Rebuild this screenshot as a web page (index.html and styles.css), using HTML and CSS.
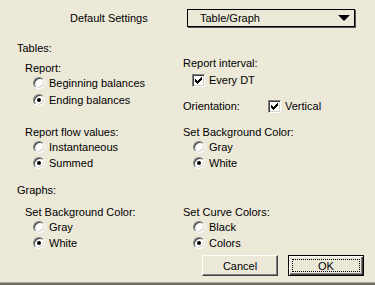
FILE: index.html
```html
<!DOCTYPE html>
<html lang="en">

<head>
    <meta charset="UTF-8">
    <title>Default Settings</title>
    <link rel="stylesheet" href="styles.css">
</head>

<body>
    <div class="dialog">
        <!-- top: settings popup -->
        <div class="header">
            <span class="header-label">Default Settings</span>
            <div class="popup">
                <span>Table/Graph</span>
                <span class="arrow"></span>
            </div>
        </div>

        <!-- tables -->
        <div class="cols block1">
            <div class="col">
                <div class="section-title">Tables:</div>
                <div class="group report">
                    <div class="group-title">Report:</div>
                    <div class="opt"><span class="radio"></span>Beginning balances</div>
                    <div class="opt ending"><span class="radio on"></span>Ending balances</div>
                </div>
            </div>
            <div class="col interval">
                <div class="group-title">Report interval:</div>
                <div class="opt check-opt every"><span class="check"><svg viewBox="0 0 7 7" width="7" height="7"><path d="M0 2h1v3H0zM1 3h1v3H1zM2 4h1v3H2zM3 3h1v3H3zM4 2h1v3H4zM5 1h1v3H5zM6 0h1v3H6z" /></svg></span>Every DT</div>
                <div class="orientation">
                    <span class="orient-label">Orientation:</span>
                    <span class="check"><svg viewBox="0 0 7 7" width="7" height="7"><path d="M0 2h1v3H0zM1 3h1v3H1zM2 4h1v3H2zM3 3h1v3H3zM4 2h1v3H4zM5 1h1v3H5zM6 0h1v3H6z" /></svg></span>
                    <span>Vertical</span>
                </div>
            </div>
        </div>

        <div class="cols block2">
            <div class="col">
                <div class="group">
                    <div class="group-title">Report flow values:</div>
                    <div class="opt"><span class="radio"></span>Instantaneous</div>
                    <div class="opt"><span class="radio on"></span>Summed</div>
                </div>
            </div>
            <div class="col">
                <div class="group-title">Set Background Color:</div>
                <div class="opt right-opt"><span class="radio"></span>Gray</div>
                <div class="opt right-opt"><span class="radio on"></span>White</div>
            </div>
        </div>

        <!-- graphs -->
        <div class="section-title graphs">Graphs:</div>
        <div class="cols block3">
            <div class="col">
                <div class="group">
                    <div class="group-title">Set Background Color:</div>
                    <div class="opt"><span class="radio"></span>Gray</div>
                    <div class="opt"><span class="radio on"></span>White</div>
                </div>
            </div>
            <div class="col">
                <div class="group-title">Set Curve Colors:</div>
                <div class="opt right-opt"><span class="radio"></span>Black</div>
                <div class="opt right-opt"><span class="radio on"></span>Colors</div>
            </div>
        </div>

        <!-- buttons -->
        <div class="buttons">
            <button class="btn">Cancel</button>
            <button class="btn default">OK</button>
        </div>
    </div>
</body>

</html>
```

FILE: styles.css
```css
* {
    margin: 0;
    padding: 0;
}

body {
    background: #716f64;
    font-family: "Liberation Sans", Arial, sans-serif;
    font-size: 11px;
    color: #000;
    width: 375px;
    height: 285px;
    overflow: hidden;
}

/* dialog face */
.dialog {
    height: 282px;
    background: #ece9d8;
    border-bottom: 1px solid #aca899;
}

/* header row */
.header {
    display: flex;
    align-items: center;
    padding-top: 9px;
}

.header-label {
    width: 117px;
    padding-left: 70px;
}

.popup {
    width: 168px;
    height: 18px;
    box-sizing: border-box;
    border: 1px solid #000;
    box-shadow: 1px 1px 0 #555;
    display: flex;
    align-items: center;
    justify-content: space-between;
    padding: 0 4px 0 12px;
}

.popup .arrow {
    width: 0;
    height: 0;
    border-left: 6px solid transparent;
    border-right: 6px solid transparent;
    border-top: 6px solid #000;
}

/* two columns */
.cols {
    display: grid;
    grid-template-columns: 166px 1fr;
    padding-left: 17px;
}

.block1 {
    margin-top: 13px;
}

.block2 {
    margin-top: 10px;
}

.block3 {
    margin-top: 6px;
}

.section-title {
    height: 16px;
    line-height: 16px;
}

.graphs {
    margin-top: 11px;
    padding-left: 17px;
}

.group {
    padding-left: 8px;
}

.report {
    margin-top: 4px;
}

.group-title {
    height: 13px;
    padding-top: 2px;
    line-height: 13px;
}

.interval {
    padding-top: 15px;
}

/* option rows */
.opt {
    height: 16px;
    line-height: 16px;
    display: flex;
    align-items: center;
    gap: 4px;
    padding-left: 8px;
}

.ending {
    margin-top: 1px;
}

.right-opt {
    padding-left: 10px;
}

.every {
    margin-top: 2px;
    padding-left: 9px;
}

.orientation {
    margin-top: 10px;
    height: 16px;
    display: flex;
    align-items: center;
    gap: 4px;
}

.orient-label {
    width: 81px;
}

/* radio */
.radio {
    width: 12px;
    height: 12px;
    box-sizing: border-box;
    border-radius: 50%;
    background: #fff;
    border: 1px solid;
    border-color: #808080 #fff #fff #808080;
    box-shadow: inset 1px 1px 0 #404040, inset -1px -1px 0 #d4d0c8;
    display: flex;
    align-items: center;
    justify-content: center;
}

.radio.on::after {
    content: '';
    width: 4px;
    height: 4px;
    border-radius: 50%;
    background: #000;
}

/* checkbox */
.check {
    width: 13px;
    height: 13px;
    box-sizing: border-box;
    background: #fff;
    border: 1px solid;
    border-color: #808080 #fff #fff #808080;
    box-shadow: inset 1px 1px 0 #404040, inset -1px -1px 0 #d4d0c8;
    display: flex;
    align-items: center;
    justify-content: center;
}

.check svg {
    display: block;
    fill: #000;
    shape-rendering: crispEdges;
}

/* buttons */
.buttons {
    display: flex;
    justify-content: flex-end;
    gap: 10px;
    padding-right: 11px;
    margin-top: 4px;
}

.btn {
    width: 76px;
    height: 21px;
    box-sizing: border-box;
    background: #ece9d8;
    font-family: "Liberation Sans", Arial, sans-serif;
    font-size: 11px;
    color: #000;
    border: 1px solid;
    border-color: #fff #404040 #404040 #fff;
    box-shadow: inset -1px -1px 0 #808080;
    position: relative;
}

.btn.default {
    border: 1px solid #000;
    box-shadow: inset 1px 1px 0 #fff, inset -1px -1px 0 #404040, inset -2px -2px 0 #808080;
}

/* focus rect */
.btn.default::after {
    content: '';
    position: absolute;
    top: 3px;
    left: 3px;
    right: 3px;
    bottom: 3px;
    border: 1px dotted #000;
}
```
